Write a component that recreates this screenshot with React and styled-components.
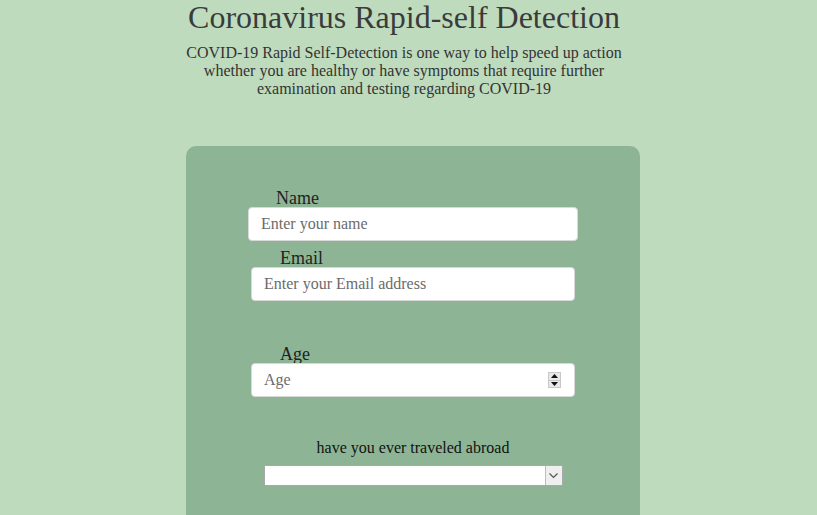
import React from "react";
import styled, { createGlobalStyle } from "styled-components";

const GlobalStyle = createGlobalStyle`
  html, body {
    margin: 0;
    padding: 0;
    background: #bfdbbd;
    font-family: "Liberation Serif", "Times New Roman", serif;
  }
`;

function App() {
  return (
    <Page>
      <GlobalStyle />
      <Title>Coronavirus Rapid-self Detection</Title>
      <Intro>
        COVID-19 Rapid Self-Detection is one way to help speed up action
        whether you are healthy or have symptoms that require further
        examination and testing regarding COVID-19
      </Intro>
      <Card>
        <Field width={330} top={0}>
          <Label indent={28}>Name</Label>
          <TextInput type="text" placeholder="Enter your name" />
        </Field>
        <Field width={324} top={8}>
          <Label indent={29}>Email</Label>
          <TextInput type="email" placeholder="Enter your Email address" />
        </Field>
        <Field width={324} top={44}>
          <Label indent={29}>Age</Label>
          <SpinWrap>
            <TextInput type="text" placeholder="Age" />
            <Spinner>
              <SpinHalf>
                <svg width="7" height="4" viewBox="0 0 7 4">
                  <path d="M0 4 L3.5 0 L7 4 Z" fill="#111" />
                </svg>
              </SpinHalf>
              <SpinHalf>
                <svg width="7" height="4" viewBox="0 0 7 4">
                  <path d="M0 0 L3.5 4 L7 0 Z" fill="#111" />
                </svg>
              </SpinHalf>
            </Spinner>
          </SpinWrap>
        </Field>
        <Question>have you ever traveled abroad</Question>
        <SelectBox>
          <SelectButton>
            <svg width="9" height="6" viewBox="0 0 9 6">
              <path d="M0.5 0.5 L4.5 4.5 L8.5 0.5" fill="none" stroke="#555" strokeWidth="1.2" />
            </svg>
          </SelectButton>
        </SelectBox>
      </Card>
    </Page>
  );
}

const Page = styled.div`
  display: flex;
  flex-direction: column;
  align-items: center;
  width: 817px;
  padding-right: 9px;
  box-sizing: border-box;
  height: 515px;
  overflow: hidden;
`;

const Title = styled.h1`
  margin: 0;
  font-size: 32px;
  font-weight: normal;
  color: #3b3b3b;
  line-height: 34px;
`;

const Intro = styled.p`
  margin: 10px 0 0;
  width: 450px;
  text-align: center;
  font-size: 16px;
  line-height: 18px;
  color: #333;
`;

const Card = styled.div`
  margin-top: 48px;
  margin-left: 18px;
  width: 454px;
  height: 460px;
  flex-shrink: 0;
  background: #8db595;
  border-radius: 10px;
  padding-top: 43px;
  box-sizing: border-box;
  display: flex;
  flex-direction: column;
  align-items: center;
`;

const Field = styled.div`
  width: ${(p) => p.width}px;
  margin-top: ${(p) => p.top}px;
  display: flex;
  flex-direction: column;
`;

const Label = styled.label`
  padding-left: ${(p) => p.indent}px;
  font-size: 18px;
  line-height: 18px;
  color: #222;
`;

const TextInput = styled.input`
  width: 100%;
  height: 34px;
  box-sizing: border-box;
  border: 1px solid #d9d9d9;
  border-radius: 4px;
  background: #fff;
  padding: 0 12px;
  font-family: "Liberation Serif", "Times New Roman", serif;
  font-size: 16px;
  color: #333;
  outline: none;
  &::placeholder {
    color: #6b6b6b;
  }
`;

const SpinWrap = styled.div`
  position: relative;
`;

const Spinner = styled.div`
  position: absolute;
  right: 14px;
  top: 9px;
  width: 13px;
  height: 16px;
  display: flex;
  flex-direction: column;
  border: 1px solid #c8c8c8;
  box-sizing: border-box;
  background: #e8e8e8;
`;

const SpinHalf = styled.div`
  flex: 1;
  display: flex;
  align-items: center;
  justify-content: center;
  & + & {
    border-top: 1px solid #c8c8c8;
  }
`;

const Question = styled.div`
  margin-top: 42px;
  font-size: 16px;
  line-height: 18px;
  color: #111;
`;

const SelectBox = styled.div`
  margin-top: 8px;
  width: 299px;
  height: 21px;
  box-sizing: border-box;
  border: 1px solid #a9a9a9;
  background: #fff;
  display: flex;
  justify-content: flex-end;
`;

const SelectButton = styled.div`
  width: 17px;
  height: 19px;
  box-sizing: border-box;
  border-left: 1px solid #bcbcbc;
  background: #efefef;
  display: flex;
  align-items: center;
  justify-content: center;
`;

export default App;
